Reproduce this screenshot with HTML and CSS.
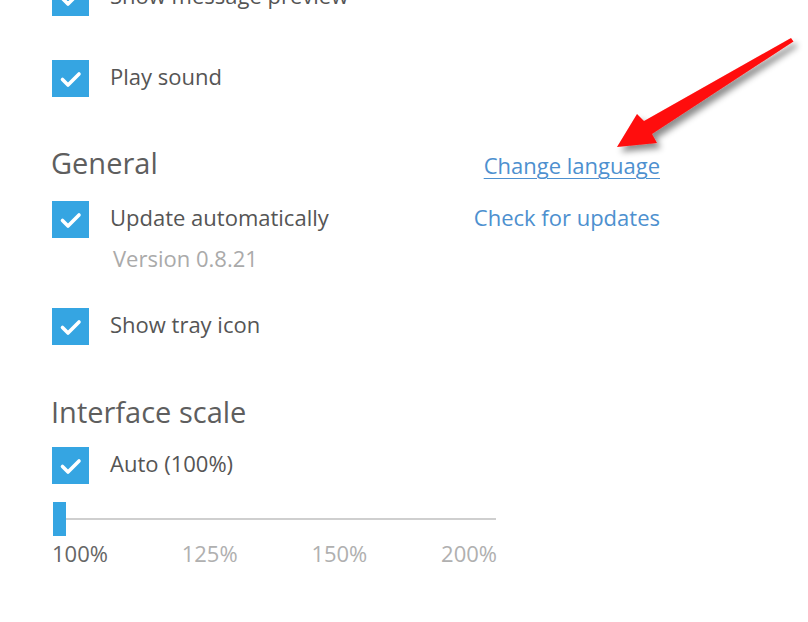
FILE: index.html
```html
<!DOCTYPE html>
<html lang="en">
<head>
<meta charset="utf-8">
<title>Settings</title>
<link rel="stylesheet" href="styles.css">
</head>
<body>
<main class="settings">
  <div class="check-row row-preview">
    <span class="checkbox"><svg viewBox="0 0 37 37" width="37" height="37"><path d="M10.5 19.5 L16 25 L27 14" /></svg></span>
    <span class="label">Show message preview</span>
  </div>
  <div class="check-row row-sound">
    <span class="checkbox"><svg viewBox="0 0 37 37" width="37" height="37"><path d="M10.5 19.5 L16 25 L27 14" /></svg></span>
    <span class="label">Play sound</span>
  </div>

  <div class="section-head head-general">
    <h2>General</h2>
    <a class="link underlined" href="#">Change language</a>
  </div>
  <div class="check-row row-update">
    <span class="checkbox"><svg viewBox="0 0 37 37" width="37" height="37"><path d="M10.5 19.5 L16 25 L27 14" /></svg></span>
    <span class="label">Update automatically</span>
    <a class="link push" href="#">Check for updates</a>
  </div>
  <div class="version">Version 0.8.21</div>
  <div class="check-row row-tray">
    <span class="checkbox"><svg viewBox="0 0 37 37" width="37" height="37"><path d="M10.5 19.5 L16 25 L27 14" /></svg></span>
    <span class="label">Show tray icon</span>
  </div>

  <div class="section-head head-scale">
    <h2>Interface scale</h2>
  </div>
  <div class="check-row row-auto">
    <span class="checkbox"><svg viewBox="0 0 37 37" width="37" height="37"><path d="M10.5 19.5 L16 25 L27 14" /></svg></span>
    <span class="label">Auto (100%)</span>
  </div>
  <div class="slider">
    <span class="handle"></span>
    <span class="track"></span>
  </div>
  <div class="scale-labels">
    <span class="active">100%</span>
    <span>125%</span>
    <span>150%</span>
    <span>200%</span>
  </div>
</main>

<svg class="arrow" width="808" height="622" viewBox="0 0 808 622">
  <defs>
    <filter id="sh" x="-20%" y="-20%" width="140%" height="140%">
      <feDropShadow dx="4" dy="5" stdDeviation="3" flood-color="#000" flood-opacity="0.45"/>
    </filter>
  </defs>
  <polygon points="791,38 793.5,41.5 652,134 657,143 617,147 637,114 644,121" fill="#ff0a0a" filter="url(#sh)"/>
</svg>
</body>
</html>
```
FILE: styles.css
```css
html, body {
  margin: 0;
  padding: 0;
  background: #ffffff;
}

body {
  font-family: "Open Sans", "Liberation Sans", sans-serif;
  color: #555555;
  width: 808px;
  height: 622px;
  overflow: hidden;
  position: relative;
}

.settings {
  width: 608px;
  margin: -21px 0 0 52px;
  display: flex;
  flex-direction: column;
}

.check-row {
  display: flex;
  align-items: flex-start;
  height: 37px;
}

.checkbox {
  width: 37px;
  height: 37px;
  background: #35a5e2;
  flex: none;
  display: block;
}

.checkbox svg {
  display: block;
}

.checkbox path {
  fill: none;
  stroke: #ffffff;
  stroke-width: 3.6;
  stroke-linecap: round;
  stroke-linejoin: round;
}

.label {
  margin-left: 21px;
  font-size: 22px;
  line-height: 32px;
  color: #555555;
  white-space: nowrap;
}

.link {
  font-size: 22px;
  line-height: 32px;
  color: #4d90cf;
  text-decoration: none;
  white-space: nowrap;
}

.link.underlined {
  text-decoration: underline;
  text-decoration-thickness: 1px;
  text-underline-offset: 4px;
}

.push {
  margin-left: auto;
}

.row-sound {
  margin-top: 44px;
}

.section-head {
  display: flex;
  align-items: baseline;
  justify-content: space-between;
}

.section-head h2 {
  margin: 0 0 0 -1px;
  font-size: 29px;
  line-height: 34px;
  font-weight: 400;
  color: #5e5e5e;
}

.head-general {
  margin-top: 49px;
}

.row-update {
  margin-top: 20px;
}

.version {
  margin: 8px 0 0 61px;
  font-size: 22px;
  line-height: 24px;
  color: #aaaaaa;
}

.row-tray {
  margin-top: 38px;
}

.head-scale {
  margin-top: 50px;
}

.row-auto {
  margin-top: 18px;
}

.slider {
  margin-top: 18px;
  width: 444px;
  height: 34px;
  display: flex;
  align-items: center;
}

.handle {
  width: 13px;
  height: 34px;
  margin-left: 1px;
  background: #35a5e2;
  flex: none;
}

.track {
  flex: 1;
  height: 2px;
  background: #cfcfcf;
}

.scale-labels {
  margin-top: 5px;
  width: 445px;
  display: flex;
  justify-content: space-between;
  font-size: 22px;
  line-height: 24px;
  color: #b0b0b0;
}

.scale-labels .active {
  color: #666666;
}

.arrow {
  position: absolute;
  left: 0;
  top: 0;
  pointer-events: none;
}
```
